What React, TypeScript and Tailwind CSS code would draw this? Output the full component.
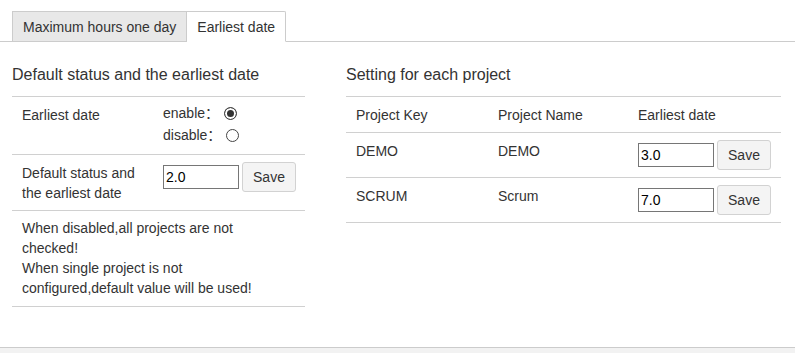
import { useState } from 'react';

interface ProjectRow {
    key: string;
    name: string;
    earliest: string;
}

const projects: ProjectRow[] = [
    { key: 'DEMO', name: 'DEMO', earliest: '3.0' },
    { key: 'SCRUM', name: 'Scrum', earliest: '7.0' },
];

const Radio = ({ checked, onChange }: { checked: boolean; onChange: () => void }) => (
    <input
        type="radio"
        checked={checked}
        onChange={onChange}
        className="ml-[5px] h-[13px] w-[13px] appearance-none rounded-full border border-[#444] bg-white checked:bg-[#333] checked:shadow-[inset_0_0_0_2px_#fff]"
    />
);

const SaveButton = () => (
    <button className="ml-[3px] h-[30px] w-[54px] rounded-[3px] border border-[#d2d2d2] bg-[#f4f4f4] text-[14px] text-[#333]">
        Save
    </button>
);

const DateInput = ({ value }: { value: string }) => (
    <input
        type="text"
        defaultValue={value}
        className="h-[24px] w-[76px] border border-[#767676] px-[2px] text-[14px] text-black outline-none"
    />
);

export default function App() {
    const [enabled, setEnabled] = useState(true);

    return (
        <div className="flex h-[353px] flex-col bg-white font-['Liberation_Sans','Noto_Sans_CJK_SC',sans-serif] text-[14px] leading-[20px] text-[#333]">
            {/* tabs */}
            <div className="flex border-b border-[#ccc] pl-[12px] pt-[11px]">
                <div className="-mb-px flex h-[31px] items-center border border-[#ccc] bg-[#e8e8e8] px-[10px]">
                    Maximum hours one day
                </div>
                <div className="-mb-px flex h-[31px] items-center rounded-tr-[2px] border border-l-0 border-[#ccc] border-b-white bg-white px-[10px]">
                    Earliest date
                </div>
            </div>

            <div className="flex flex-1 gap-[41px] pl-[12px] pt-[24px]">
                {/* left panel */}
                <div className="w-[293px]">
                    <h4 className="mb-[12px] text-[16px] leading-[18px]">Default status and the earliest date</h4>
                    <div className="border-t border-[#d0d0d0]">
                        <div className="flex border-b border-[#d0d0d0]">
                            <div className="w-[141px] px-[10px] pt-[8px]">Earliest date</div>
                            <div className="flex-1 pb-[8px] pl-[10px] pt-[5px]">
                                <div className="flex h-[22px] items-center">
                                    enable：<Radio checked={enabled} onChange={() => setEnabled(true)} />
                                </div>
                                <div className="flex h-[22px] items-center">
                                    disable：<Radio checked={!enabled} onChange={() => setEnabled(false)} />
                                </div>
                            </div>
                        </div>
                        <div className="flex border-b border-[#d0d0d0]">
                            <div className="w-[141px] px-[10px] pb-[7px] pt-[8px]">Default status and the earliest date</div>
                            <div className="flex flex-1 items-center self-start pl-[10px] pt-[7px]">
                                <DateInput value="2.0" />
                                <SaveButton />
                            </div>
                        </div>
                        <div className="border-b border-[#d0d0d0] px-[10px] pb-[8px] pt-[7px]">
                            <p className="max-w-[250px]">When disabled,all projects are not checked!</p>
                            <p className="max-w-[250px]">When single project is not configured,default value will be used!</p>
                        </div>
                    </div>
                </div>

                {/* right panel */}
                <div className="w-[435px]">
                    <h4 className="mb-[12px] text-[16px] leading-[18px]">Setting for each project</h4>
                    <div className="border-t border-[#d0d0d0]">
                        <div className="flex border-b border-[#d0d0d0] pb-[7px] pt-[8px]">
                            <div className="w-[142px] px-[10px]">Project Key</div>
                            <div className="w-[140px] px-[10px]">Project Name</div>
                            <div className="flex-1 px-[10px]">Earliest date</div>
                        </div>
                        {projects.map((p) => (
                            <div key={p.key} className="flex border-b border-[#d0d0d0] pb-[7px]">
                                <div className="w-[142px] px-[10px] pt-[8px]">{p.key}</div>
                                <div className="w-[140px] px-[10px] pt-[8px]">{p.name}</div>
                                <div className="flex flex-1 items-center px-[10px] pt-[7px]">
                                    <DateInput value={p.earliest} />
                                    <SaveButton />
                                </div>
                            </div>
                        ))}
                    </div>
                </div>
            </div>

            <div className="h-[6px] border-t border-[#ccc] bg-[#f2f2f2]" />
        </div>
    );
}
